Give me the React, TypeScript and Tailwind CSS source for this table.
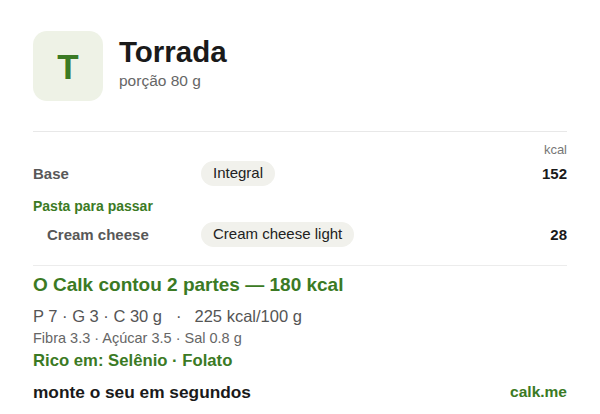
import React from "react";

const green = "text-[#3b7a24]";

function Row({ label, pill, kcal, indent }: { label: string; pill: string; kcal: string; indent?: boolean }) {
  return (
    <div className="grid grid-cols-[168px_1fr_auto] items-center">
      <div className={`text-[15px] leading-[20px] font-bold text-[#585858] ${indent ? "pl-[14px]" : ""}`}>{label}</div>
      <div>
        <span className="inline-flex h-[25px] items-center rounded-full bg-[#f1f1ec] px-[12px] text-[15px] text-[#222]">{pill}</span>
      </div>
      <div className="text-[15px] leading-[20px] font-bold text-[#1a1a1a]">{kcal}</div>
    </div>
  );
}

export default function App() {
  return (
    <div
      className="w-[600px] h-[414px] overflow-hidden bg-white px-[33px] pt-[31px]"
      style={{ fontFamily: '"Liberation Sans", Arial, sans-serif' }}
    >
      <div className="flex items-start gap-[16px]">
        <div className="flex h-[70px] w-[70px] items-center justify-center rounded-[14px] bg-[#eef2e6]">
          <span className={`text-[35px] font-bold leading-none ${green}`}>T</span>
        </div>
        <div className="mt-[4px]">
          <div className="text-[29.5px] leading-[34px] font-bold text-[#1a1a1a]">Torrada</div>
          <div className="mt-[2px] text-[15.5px] leading-[20px] text-[#666]">porção 80 g</div>
        </div>
      </div>

      <div className="mt-[30px] h-px bg-[#e8e8e8]" />

      <div className="mt-[10px] text-right text-[13px] leading-[16px] text-[#777]">kcal</div>
      <div className="mt-[3px]">
        <Row label="Base" pill="Integral" kcal="152" />
      </div>
      <div className={`mt-[11px] text-[14px] leading-[18px] font-bold ${green}`}>Pasta para passar</div>
      <div className="mt-[7px]">
        <Row label="Cream cheese" pill="Cream cheese light" kcal="28" indent />
      </div>

      <div className="mt-[18px] h-px bg-[#ececec]" />

      <div className={`mt-[7px] text-[19px] leading-[24px] font-bold ${green}`}>O Calk contou 2 partes — 180 kcal</div>
      <div className="mt-[8px] flex text-[16.5px] leading-[22px] text-[#555]">
        <span>P 7 · G 3 · C 30 g</span>
        <span className="ml-[14px]">·</span>
        <span className="ml-[13px]">225 kcal/100 g</span>
      </div>
      <div className="mt-[2px] text-[14.5px] leading-[18px] text-[#666]">Fibra 3.3 · Açúcar 3.5 · Sal 0.8 g</div>
      <div className={`mt-[3px] text-[16.7px] leading-[22px] font-bold ${green}`}>Rico em: Selênio · Folato</div>
      <div className="mt-[8px] flex items-center justify-between">
        <span className="text-[17.3px] leading-[24px] font-bold text-[#1a1a1a]">monte o seu em segundos</span>
        <span className={`text-[15.5px] leading-[24px] font-bold ${green}`}>calk.me</span>
      </div>
    </div>
  );
}
